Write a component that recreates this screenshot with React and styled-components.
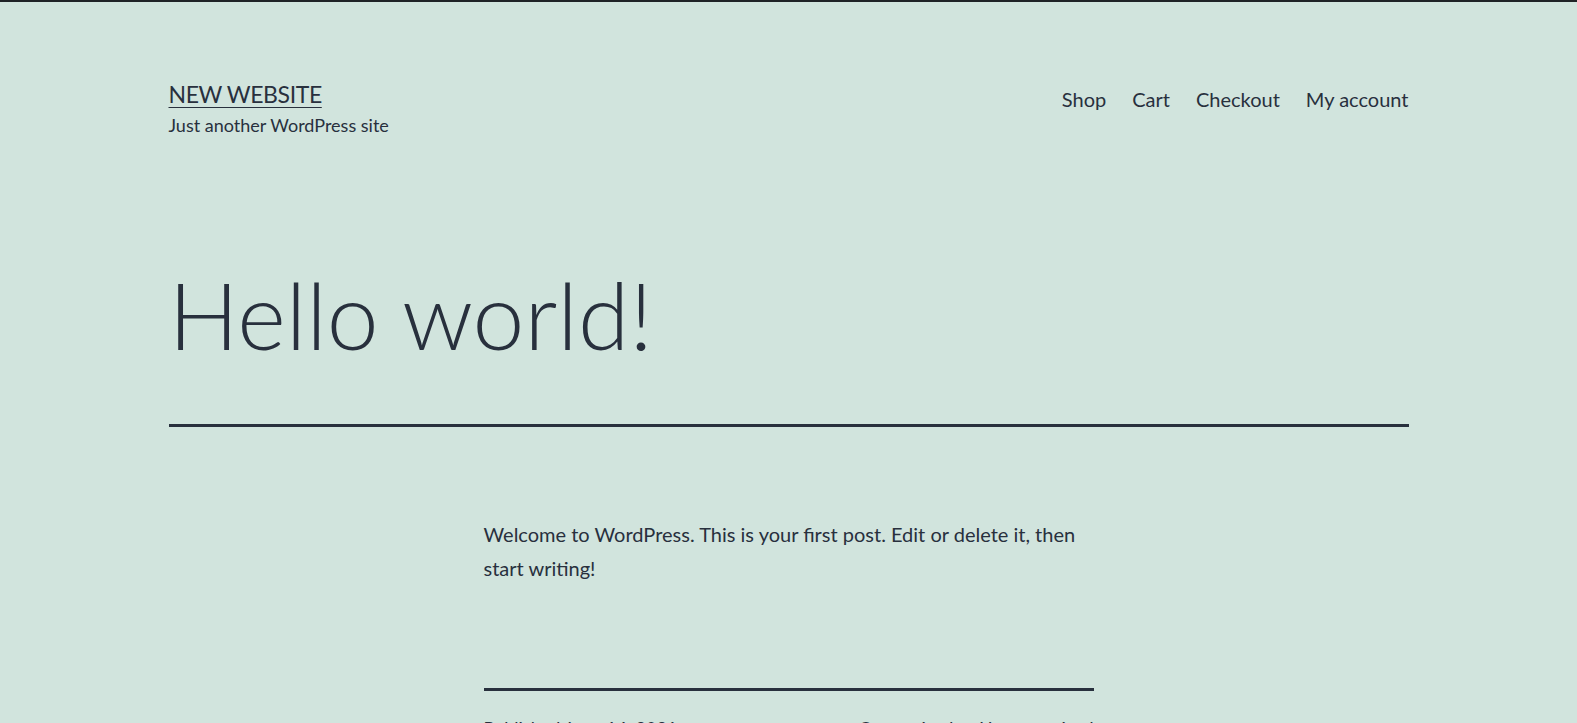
import styled, { createGlobalStyle } from "styled-components";

const GlobalStyle = createGlobalStyle`
  body {
    margin: 0;
    background-color: #d1e4dd;
    color: #28303d;
    font-family: "Lato", "Open Sans", sans-serif;
  }
`;

export default function App() {
  const menu = ["Shop", "Cart", "Checkout", "My account"];
  return (
    <>
      <GlobalStyle />
      <Page>
        <Header>
          <Branding>
            <SiteTitle href="#">NEW WEBSITE</SiteTitle>
            <Tagline>Just another WordPress site</Tagline>
          </Branding>
          <Menu>
            {menu.map((item) => (
              <MenuItem key={item} href="#">
                {item}
              </MenuItem>
            ))}
          </Menu>
        </Header>
        <EntryHeader>
          <EntryTitle>Hello world!</EntryTitle>
        </EntryHeader>
        <Content>
          <p>
            Welcome to WordPress. This is your first post. Edit or delete it,
            then start writing!
          </p>
        </Content>
        <EntryFooter>
          <span>Published June 14, 2021</span>
          <span>Categorized as Uncategorized</span>
        </EntryFooter>
      </Page>
    </>
  );
}

const Page = styled.div`
  border-top: 2px solid #1f2326;
  min-height: 721px;
  overflow: hidden;
`;

const Header = styled.header`
  max-width: 1240px;
  margin: 0 auto;
  padding-top: 77px;
  display: flex;
  justify-content: space-between;
  align-items: flex-start;
`;

const Branding = styled.div`
  display: flex;
  flex-direction: column;
`;

const SiteTitle = styled.a`
  font-size: 23px;
  line-height: 31px;
  letter-spacing: -0.4px;
  text-transform: uppercase;
  color: #28303d;
  text-decoration: underline;
  text-decoration-thickness: 1px;
  text-underline-offset: 4px;
  align-self: flex-start;
`;

const Tagline = styled.p`
  margin: 3px 0 0;
  font-size: 18px;
  line-height: 1.4;
`;

const Menu = styled.nav`
  display: flex;
  gap: 26px;
  padding-top: 7px;
`;

const MenuItem = styled.a`
  font-size: 20px;
  line-height: 1.3;
  color: #28303d;
  text-decoration: none;
`;

const EntryHeader = styled.div`
  max-width: 1240px;
  margin: 116px auto 0;
  border-bottom: 3px solid #28303d;
  padding-bottom: 49px;
`;

const EntryTitle = styled.h1`
  margin: 0;
  font-size: 93px;
  font-weight: 300;
  line-height: 1.3;
`;

const Content = styled.div`
  max-width: 610px;
  margin: 0 auto;
  padding-top: 90px;
  padding-bottom: 103px;
  font-size: 20px;
  line-height: 1.7;

  p {
    margin: 0;
  }
`;

const EntryFooter = styled.footer`
  max-width: 610px;
  margin: 0 auto;
  border-top: 3px solid #28303d;
  padding-top: 26px;
  display: flex;
  justify-content: space-between;
  font-size: 18px;
`;
